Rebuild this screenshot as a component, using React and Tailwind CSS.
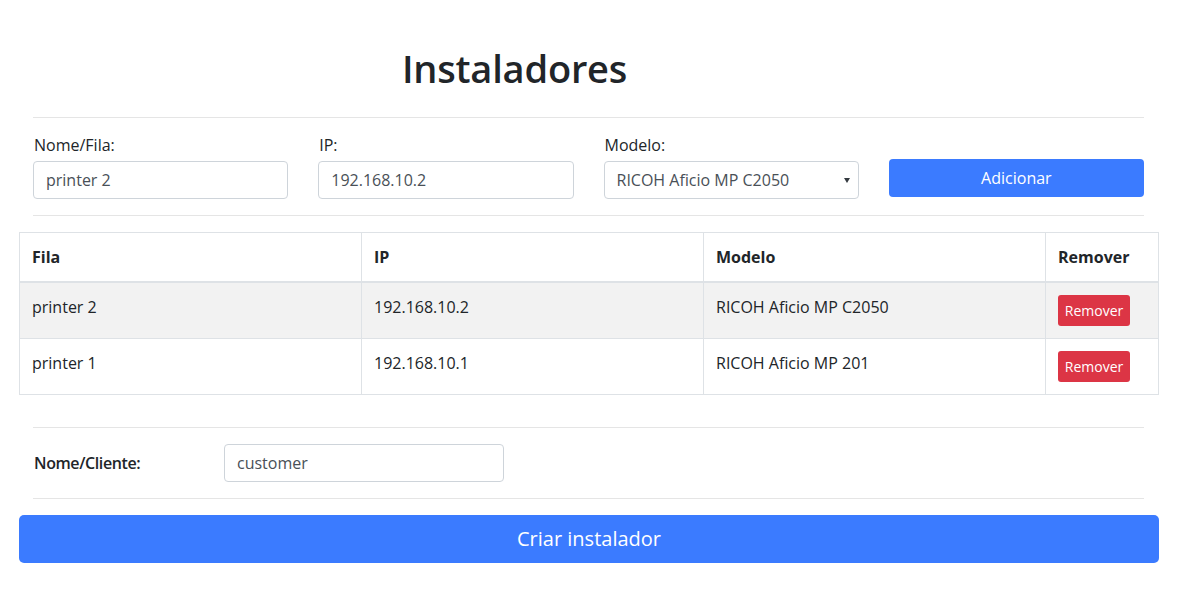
export default function App() {
  const rows = [
    { fila: "printer 2", ip: "192.168.10.2", modelo: "RICOH Aficio MP C2050" },
    { fila: "printer 1", ip: "192.168.10.1", modelo: "RICOH Aficio MP 201" },
  ];
  const inputCls =
    "w-full h-[38px] rounded-[4px] border border-[#ced4da] bg-white px-[12px] text-[16px] text-[#495057] outline-none";
  return (
    <div className="min-h-[602px] bg-white pl-[19px] pr-[24px] pt-[44px] font-['Open_Sans',sans-serif] text-[#212529]">
      <div className="px-[14px] pr-[15px]">
        <div className="w-[963px] text-center text-[38px] leading-[48px] font-semibold tracking-[-0.2px]">Instaladores</div>
        <hr className="mt-[25px] border-t border-[#e5e5e5]" />
        <div className="grid grid-cols-4 gap-x-[30px] pt-[15px] pb-[16px]">
          <div>
            <label className="block pl-[1px] text-[16px] leading-[24px] font-medium mb-[4px]">Nome/Fila:</label>
            <input className={inputCls} defaultValue="printer 2" />
          </div>
          <div>
            <label className="block pl-[1px] text-[16px] leading-[24px] font-medium mb-[4px]">IP:</label>
            <input className={inputCls} defaultValue="192.168.10.2" />
          </div>
          <div>
            <label className="block pl-[1px] text-[16px] leading-[24px] font-medium mb-[4px]">Modelo:</label>
            <div className="relative h-[38px] rounded-[4px] border border-[#ced4da] bg-white pl-[12px] flex items-center text-[16px] text-[#495057]">
              RICOH Aficio MP C2050
              <svg className="absolute right-[8px] top-[16px]" width="6" height="5" viewBox="0 0 6 5">
                <path d="M0 0h6L3 5z" fill="#343a40" />
              </svg>
            </div>
          </div>
          <div className="flex items-end pb-[2px]">
            <button className="w-full h-[38px] rounded-[4px] bg-[#3b7bff] text-white text-[16px]">Adicionar</button>
          </div>
        </div>
        <hr className="border-t border-[#e5e5e5]" />
      </div>

      <table className="mt-[16px] w-[1140px] border-collapse border border-[#dee2e6] text-[16px] leading-[24px]">
        <thead>
          <tr>
            <th className="w-[342px] border border-[#dee2e6] border-b-2 p-[12px] text-left font-bold">Fila</th>
            <th className="w-[342px] border border-[#dee2e6] border-b-2 p-[12px] text-left font-bold">IP</th>
            <th className="w-[342px] border border-[#dee2e6] border-b-2 p-[12px] text-left font-bold">Modelo</th>
            <th className="border border-[#dee2e6] border-b-2 p-[12px] text-left font-bold">Remover</th>
          </tr>
        </thead>
        <tbody>
          {rows.map((r, i) => (
            <tr key={r.fila} className={i === 0 ? "bg-[#f2f2f2]" : "bg-white"}>
              <td className="h-[56px] border border-[#dee2e6] p-[12px] align-top">{r.fila}</td>
              <td className="border border-[#dee2e6] p-[12px] align-top">{r.ip}</td>
              <td className="border border-[#dee2e6] p-[12px] align-top">{r.modelo}</td>
              <td className="border border-[#dee2e6] p-[12px] align-top">
                <button className="h-[31px] w-[72px] rounded-[3px] bg-[#dc3545] text-[14px] text-white">Remover</button>
              </td>
            </tr>
          ))}
        </tbody>
      </table>

      <div className="px-[14px] pr-[15px] mt-[32px]">
        <hr className="border-t border-[#e5e5e5]" />
        <div className="flex items-center py-[16px]">
          <div className="w-[191px] pl-[1px] text-[16px] leading-[24px] font-semibold tracking-[-0.4px]">Nome/Cliente:</div>
          <input className={inputCls + " !w-[280px]"} defaultValue="customer" />
        </div>
        <hr className="border-t border-[#e5e5e5]" />
      </div>
      <button className="mt-[16px] w-[1140px] h-[48px] rounded-[5px] bg-[#3b7bff] text-white text-[20px]">Criar instalador</button>
    </div>
  );
}
